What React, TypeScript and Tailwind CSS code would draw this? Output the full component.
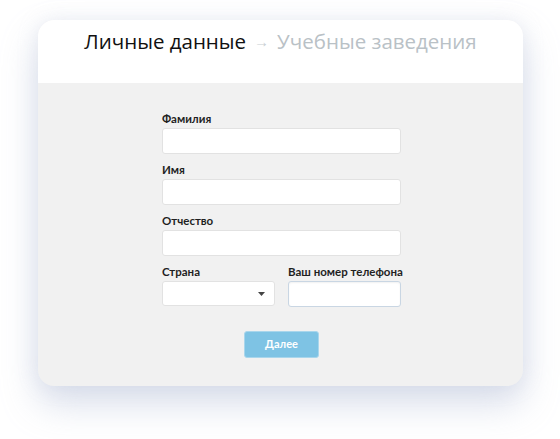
export default function App() {
  return (
    <div className="flex h-[439px] w-[560px] bg-white pl-[38px] pt-[20px] font-['Lato',sans-serif]">
      <div className="flex h-[366px] w-[485px] flex-col overflow-hidden rounded-[16px] bg-[#f1f1f1] shadow-[0_18px_36px_rgba(170,182,210,0.45),0_0_20px_rgba(190,200,220,0.25)]">
        <div className="h-[63px] bg-white pt-[6px] text-center font-['Open_Sans',sans-serif] text-[20.5px] leading-[30px]">
          <span className="text-[#111111]">Личные данные</span>
          <span className="relative top-[-2px] mx-[8px] text-[15px] text-[#c9cfd3]">→</span>
          <span className="text-[#b9c1c6]">Учебные заведения</span>
        </div>
        <div className="ml-[124px] flex w-[239px] flex-col pt-[29px]">
          <Field label="Фамилия" first />
          <Field label="Имя" />
          <Field label="Отчество" />
          <div className="mt-[9px] flex gap-[13px]">
            <div className="flex w-[113px] shrink-0 flex-col">
              <label className="mb-[2px] text-[11.5px] font-bold leading-[14px] text-[#1f1f1f]">Страна</label>
              <div className="flex h-[25px] items-center justify-end rounded-[3px] border border-[#e2e2e2] bg-white pr-[9px]">
                <svg width="7" height="4" viewBox="0 0 7 4">
                  <path d="M0 0h7L3.5 4z" fill="#444" />
                </svg>
              </div>
            </div>
            <div className="flex w-[113px] shrink-0 flex-col">
              <label className="mb-[2px] whitespace-nowrap text-[11.5px] font-bold leading-[14px] text-[#1f1f1f]">Ваш номер телефона</label>
              <input className="h-[26px] rounded-[3px] border border-[#c9d6e3] bg-white shadow-[inset_0_1px_2px_rgba(0,0,0,0.06)] outline-none" />
            </div>
          </div>
          <button className="mx-auto mt-[24px] h-[27px] w-[75px] rounded-[3px] border border-[#a9d6ec] bg-[#7ec3e4] text-[11px] font-bold text-white">
            Далее
          </button>
        </div>
      </div>
    </div>
  );
}

function Field({ label, first }: { label: string; first?: boolean }) {
  return (
    <div className={first ? "flex flex-col" : "mt-[9px] flex flex-col"}>
      <label className="mb-[2px] text-[11.5px] font-bold leading-[14px] text-[#1f1f1f]">{label}</label>
      <input className="h-[26px] rounded-[3px] border border-[#e2e2e2] bg-white outline-none" />
    </div>
  );
}
